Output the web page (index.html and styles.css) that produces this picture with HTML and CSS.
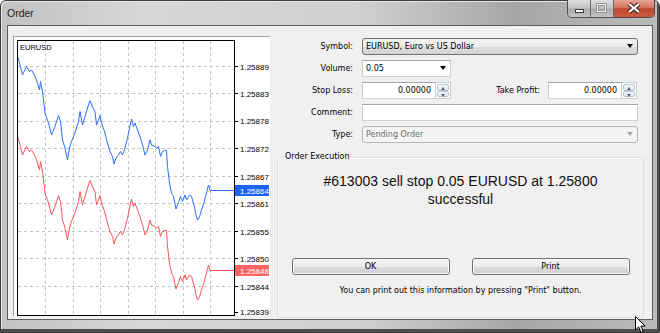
FILE: index.html
```html
<!DOCTYPE html>
<html lang="en">
<head>
    <meta charset="UTF-8">
    <title>Order</title>
    <link rel="stylesheet" href="styles.css">
</head>
<body>
    <div class="window">
        <div class="titlebar">
            <span class="title">Order</span>
            <div class="caption">
                <div class="cap-btn cap-min">
                    <svg width="22" height="17"><rect x="7.5" y="9.5" width="8" height="3" fill="#fff" stroke="#3c3c3c"/></svg>
                </div>
                <div class="cap-btn cap-max">
                    <svg width="22" height="17"><rect x="6.5" y="4.5" width="8" height="7" fill="none" stroke="#8a8a8a" stroke-width="3"/><rect x="6.5" y="4.5" width="8" height="7" fill="none" stroke="#eeeeee" stroke-width="1.2"/></svg>
                </div>
                <div class="cap-btn cap-close">
                    <svg width="41" height="17"><path d="M15 4 L25 12 M25 4 L15 12" stroke="#4a2a24" stroke-width="4.2"/><path d="M15 4 L25 12 M25 4 L15 12" stroke="#fff" stroke-width="2.2"/></svg>
                </div>
            </div>
        </div>
        <div class="client">
            <div class="chart">
                <svg width="256" height="279" viewBox="14 37 256 279">
                    <path class="grid" d="M45.5 41V315M73.5 41V315M100.5 41V315M128.5 41V315M155.5 41V315M183.5 41V315M210.5 41V315M18 66.5H234M18 93.5H234M18 121.5H234M18 148.5H234M18 176.5H234M18 203.5H234M18 231.5H234M18 258.5H234M18 286.5H234"/>
                    <polyline class="ask" transform="translate(0 -80)" points="18,137 22.5,155 26.5,146.5 29.5,151.5 31.5,150 34.5,155 36.5,160 39.5,170 40.5,161.5 42.5,171.5 45,193 48.5,203 51.5,215 55,206.5 58.5,195.5 60.5,201.5 62.5,220 65,228 67.5,240 69.5,228 71.5,221.5 75,213 78.5,201.5 80,191.5 82.5,205 85,196.5 87.5,188 90,180.5 92.5,187 95,191.5 96.5,205 98.5,200 100,195.5 101.5,203 105,213 107.5,223 110,231.5 112.5,236.5 114,244 116,238 118.5,235 120.5,231.5 122.5,235 125,228 127.5,218 130,206 131.5,199 133.5,206.5 135,203 137.5,210 140,216.5 142.5,225 145,235 147.5,230 150,220 151.5,225 154,226 156.5,228 158.5,226.5 160.5,236.5 162.5,231.5 165,230.5 166.5,230.5 167.5,246.5 169.5,263 171.5,273 173.5,276.5 176,289 178.5,282.5 180.5,276.5 182.5,281.5 185,275 186.5,280 189.5,275 191.5,276.5 194,285 196,295 197.5,300 199.5,297 201.5,290 204,282.5 206.5,273 208.5,265 210,270.5 234,270.5"/>
                    <polyline class="bid" points="18,137 22.5,155 26.5,146.5 29.5,151.5 31.5,150 34.5,155 36.5,160 39.5,170 40.5,161.5 42.5,171.5 45,193 48.5,203 51.5,215 55,206.5 58.5,195.5 60.5,201.5 62.5,220 65,228 67.5,240 69.5,228 71.5,221.5 75,213 78.5,201.5 80,191.5 82.5,205 85,196.5 87.5,188 90,180.5 92.5,187 95,191.5 96.5,205 98.5,200 100,195.5 101.5,203 105,213 107.5,223 110,231.5 112.5,236.5 114,244 116,238 118.5,235 120.5,231.5 122.5,235 125,228 127.5,218 130,206 131.5,199 133.5,206.5 135,203 137.5,210 140,216.5 142.5,225 145,235 147.5,230 150,220 151.5,225 154,226 156.5,228 158.5,226.5 160.5,236.5 162.5,231.5 165,230.5 166.5,230.5 167.5,246.5 169.5,263 171.5,273 173.5,276.5 176,289 178.5,282.5 180.5,276.5 182.5,281.5 185,275 186.5,280 189.5,275 191.5,276.5 194,285 196,295 197.5,300 199.5,297 201.5,290 204,282.5 206.5,273 208.5,265 210,270.5 234,270.5"/>
                    <rect class="frame" x="17.5" y="40.5" width="217" height="275"/>
                    <path class="ticks" d="M235 66.5h3M235 93.5h3M235 121.5h3M235 148.5h3M235 176.5h3M235 203.5h3M235 231.5h3M235 258.5h3M235 286.5h3M235 312.5h3"/>
                    <text class="symbol" x="20" y="49.5">EURUSD</text>
                    <g class="axis">
                        <text x="240" y="69.5">1.25889</text>
                        <text x="240" y="96.5">1.25883</text>
                        <text x="240" y="124">1.25878</text>
                        <text x="240" y="151.5">1.25872</text>
                        <text x="240" y="179.5">1.25867</text>
                        <text x="240" y="206.5">1.25861</text>
                        <text x="240" y="234.5">1.25855</text>
                        <text x="240" y="262">1.25850</text>
                        <text x="240" y="289.5">1.25844</text>
                        <text x="240" y="315">1.25839</text>
                    </g>
                    <rect class="tag-ask" x="235" y="185" width="34" height="11"/>
                    <text class="tag-text" x="240" y="193.8">1.25864</text>
                    <rect class="tag-bid" x="235" y="265" width="34" height="11"/>
                    <text class="tag-text" x="240" y="273.8">1.25848</text>
                </svg>
            </div>
            <div class="order">
                <div class="row">
                    <label>Symbol:</label>
                    <div class="combo combo-symbol">EURUSD, Euro vs US Dollar<span class="arrow"></span></div>
                </div>
                <div class="row">
                    <label>Volume:</label>
                    <div class="combo combo-volume">0.05<span class="arrow"></span></div>
                </div>
                <div class="row">
                    <label>Stop Loss:</label>
                    <input class="num" type="text" value="0.00000">
                    <div class="spin"><span class="up"></span><span class="down"></span></div>
                    <label class="tp-label">Take Profit:</label>
                    <input class="num" type="text" value="0.00000">
                    <div class="spin"><span class="up"></span><span class="down"></span></div>
                </div>
                <div class="row">
                    <label>Comment:</label>
                    <input class="comment" type="text" value="">
                </div>
                <div class="row">
                    <label>Type:</label>
                    <div class="combo combo-type">Pending Order<span class="arrow"></span></div>
                </div>
                <fieldset class="execution">
                    <legend>Order Execution</legend>
                    <div class="result">#613003 sell stop 0.05 EURUSD at 1.25800 successful</div>
                    <div class="buttons">
                        <button type="button">OK</button>
                        <button type="button">Print</button>
                    </div>
                    <div class="hint">You can print out this information by pressing "Print" button.</div>
                </fieldset>
            </div>
        </div>
    </div>
    <svg class="cursor" width="12" height="18"><path d="M0.5 0.5V14L3.7 10.9L6.1 16.5L8.2 15.6L5.9 10.1H10.2Z" fill="#fff" stroke="#000" stroke-linejoin="round"/></svg>
</body>
</html>
```

FILE: styles.css
```css
* { box-sizing: border-box; }
body { margin: 0; background: #fff; font-family: "DejaVu Sans", Tahoma, sans-serif; font-size: 8px; color: #000; }

/* window frame */
.window {
    width: 660px; height: 333px;
    display: flex; flex-direction: column;
    padding: 0 6px 12px 6px;
    border: 1px solid #3c3c3c; border-radius: 6px 6px 0 0;
    background: linear-gradient(90deg, #c2c2c2 0%, #d7d7d7 22%, #cfcfcf 55%, #a6a6a6 78%, #bababa 100%);
    box-shadow: inset -2px -3px 0 #4e4e4e, inset 1px 1px 0 #e8e8e8;
}
.titlebar { height: 24px; display: flex; align-items: flex-start; flex: none; }
.title { padding-top: 6px; font: 10.5px/12px "Liberation Sans", Arial, sans-serif; color: #1b1b1b; }
.caption {
    display: flex; margin: -1px -2px 0 auto; height: 18px;
    border: 1px solid #4d4d4d; border-top: 0; border-radius: 0 0 5px 5px; overflow: hidden;
}
.cap-btn { height: 17px; background: linear-gradient(#dedede, #c2c2c2 48%, #a9a9a9 52%, #c4c4c4); }
.cap-btn svg { display: block; }
.cap-min { width: 22px; }
.cap-max { width: 23px; border-left: 1px solid #6a6a6a; }
.cap-close { width: 41px; border-left: 1px solid #6a6a6a; background: linear-gradient(#e6a595, #d2735f 45%, #c0472f 52%, #cc5a40); }

.client {
    height: 295px; flex: none; display: flex; align-items: flex-start;
    padding: 10px 0 0 5px;
    border: 1px solid #5e5e5e; background: #f0f0f0;
}

/* chart */
.chart { width: 257px; height: 280px; flex: none; background: #fff; border-top: 1px solid #a0a0a0; border-left: 1px solid #a0a0a0; }
.chart svg { display: block; }
.grid { stroke: #c4c4c4; stroke-dasharray: 3 3; fill: none; shape-rendering: crispEdges; }
.frame, .ticks { fill: none; stroke: #000; shape-rendering: crispEdges; }
.ask { fill: none; stroke: #2a6fff; stroke-width: 1; }
.bid { fill: none; stroke: #ff5656; stroke-width: 1; }
.symbol { font: 7.5px "Liberation Sans", Arial, sans-serif; fill: #000; }
.axis text { font: 8px "Liberation Sans", Arial, sans-serif; fill: #000; }
.tag-ask { fill: #1d66f5; }
.tag-bid { fill: #ff6464; }
.tag-text { font: 8px "Liberation Sans", Arial, sans-serif; fill: #fff; }

/* order form */
.order { width: 367px; margin-left: 7px; padding-top: 2px; }
.row { display: flex; align-items: center; height: 17px; }
.row + .row { margin-top: 5px; }
.row label { width: 76px; margin-right: 9px; text-align: right; flex: none; }
.row .tp-label { width: 89px; margin-right: 8px; }

.combo { position: relative; height: 17px; padding: 0 3px; line-height: 15px; border: 1px solid #abadb3; flex: none; }
.combo .arrow {
    position: absolute; right: 4px; top: 5px;
    border-left: 3.5px solid transparent; border-right: 3.5px solid transparent; border-top: 4px solid #000;
}
.combo-symbol { width: 276px; border-color: #707070; border-radius: 3px; background: linear-gradient(#f3f3f3, #ebebeb 50%, #dedede 51%, #d3d3d3); }
.combo-volume { width: 89px; background: #fff; border-color: #a3a6ad #c9ccd3 #cfd3da #c9ccd3; }
.combo-type { width: 276px; border-color: #b2b6b9; border-radius: 3px; background: #f4f4f4; color: #6d6d6d; }
.combo-type .arrow { border-top-color: #a6a6a6; }

input { font: inherit; color: #000; height: 17px; margin: 0; border: 1px solid; border-color: #a3a6ad #c9ccd3 #cfd3da #c9ccd3; background: #fff; outline: none; }
.num { width: 74px; padding: 0 4px; text-align: right; }
.comment { width: 276px; padding: 0 3px; }
.spin { width: 15px; height: 17px; display: flex; flex-direction: column; border: 1px solid #c9ccd3; border-left: 0; background: #fff; padding: 1px; flex: none; }
.spin span { flex: 1; position: relative; border: 1px solid #b9c3cf; border-radius: 2px; background: linear-gradient(#f6f7f9, #e4e8ee); }
.spin span::after {
    content: ""; position: absolute; left: 3px; top: 2px;
    border-left: 2.5px solid transparent; border-right: 2.5px solid transparent;
}
.spin .up::after { border-bottom: 3px solid #4f6383; }
.spin .down::after { border-top: 3px solid #4f6383; top: 2px; }

.execution {
    margin: 9px 0 0 0; padding: 0; min-width: 0; height: 166px;
    border: 1px solid #d5dfe5; border-radius: 3px;
    box-shadow: inset 1px 1px 0 #fbfbfb;
}
.execution legend { margin-left: 4px; padding: 0 3px; line-height: 10px; }
.result { max-width: 300px; margin: 10px auto 0; font: 14px/18px "Liberation Sans", Arial, sans-serif; text-align: center; color: #111; }
.buttons { display: flex; justify-content: center; gap: 22px; margin-top: 50px; }
.buttons button {
    width: 158px; height: 17px; padding: 0; font: inherit; color: #000;
    border: 1px solid #707070; border-radius: 3px;
    background: linear-gradient(#f2f2f2, #ebebeb 50%, #dddddd 51%, #cfcfcf);
    box-shadow: inset 0 0 0 1px #fbfbfb;
}
.hint { margin-top: 11px; text-align: center; line-height: 10px; }

.cursor { position: absolute; left: 635px; top: 316px; }
```
